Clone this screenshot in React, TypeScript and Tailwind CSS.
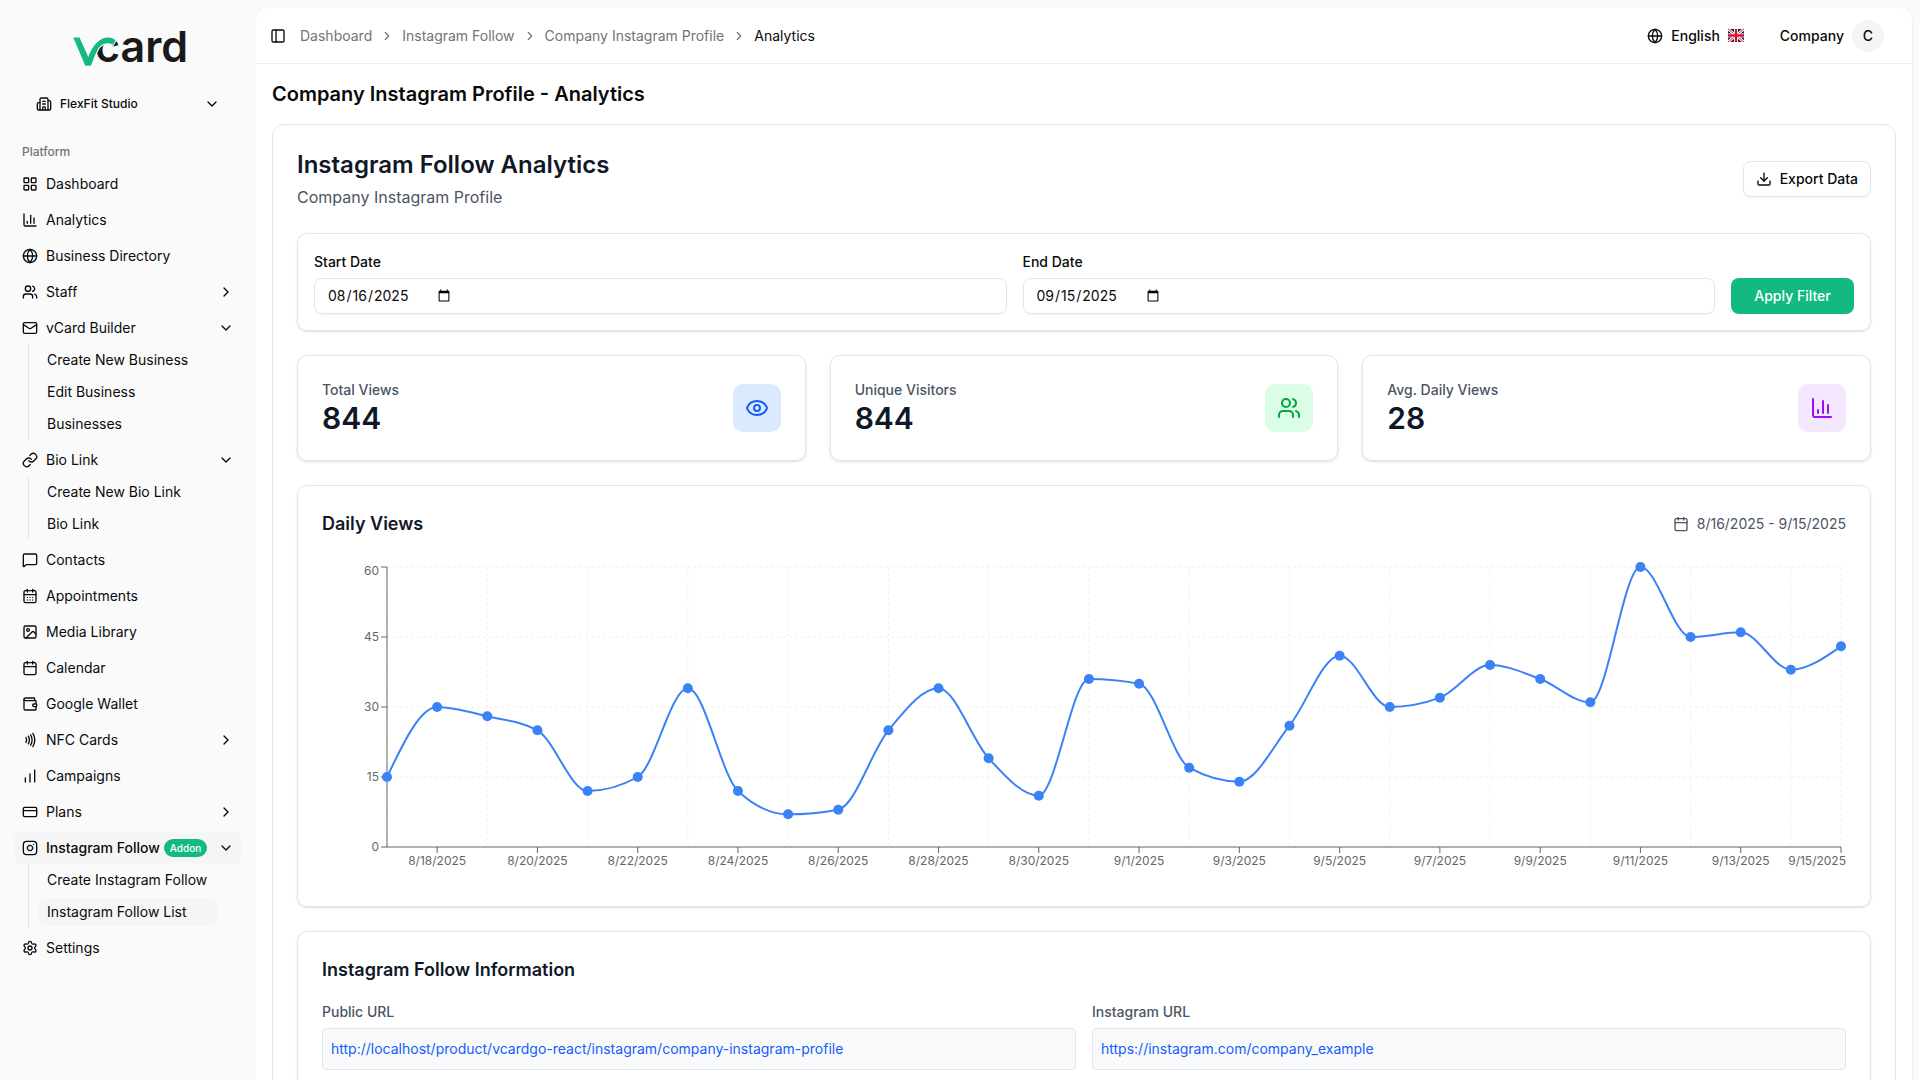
import React, { useLayoutEffect, useRef, useState } from 'react';
import {
    Calendar, CalendarDays, ChartColumn, ChevronDown, ChevronRight, CreditCard, Download, Eye, Globe, Image,
    Instagram, LayoutGrid, Link as LinkIcon, Mail, MessageSquare, Nfc, PanelLeft, Settings, Users, Wallet,
    Building2, ChartNoAxesColumnIncreasing,
} from 'lucide-react';

interface NavItem {
    label: string;
    icon: React.ElementType;
    collapsed?: boolean;
    active?: boolean;
    badge?: string;
    children?: { label: string; active?: boolean }[];
}

const NAV: NavItem[] = [
    { label: 'Dashboard', icon: LayoutGrid },
    { label: 'Analytics', icon: ChartColumn },
    { label: 'Business Directory', icon: Globe },
    { label: 'Staff', icon: Users, collapsed: true },
    {
        label: 'vCard Builder',
        icon: Mail,
        children: [{ label: 'Create New Business' }, { label: 'Edit Business' }, { label: 'Businesses' }],
    },
    { label: 'Bio Link', icon: LinkIcon, children: [{ label: 'Create New Bio Link' }, { label: 'Bio Link' }] },
    { label: 'Contacts', icon: MessageSquare },
    { label: 'Appointments', icon: CalendarDays },
    { label: 'Media Library', icon: Image },
    { label: 'Calendar', icon: Calendar },
    { label: 'Google Wallet', icon: Wallet },
    { label: 'NFC Cards', icon: Nfc, collapsed: true },
    { label: 'Campaigns', icon: ChartNoAxesColumnIncreasing },
    { label: 'Plans', icon: CreditCard, collapsed: true },
    {
        label: 'Instagram Follow',
        icon: Instagram,
        active: true,
        badge: 'Addon',
        children: [{ label: 'Create Instagram Follow' }, { label: 'Instagram Follow List', active: true }],
    },
    { label: 'Settings', icon: Settings },
];

const STATS = [
    { label: 'Total Views', value: '844', icon: Eye, tone: 'bg-blue-100 text-blue-600' },
    { label: 'Unique Visitors', value: '844', icon: Users, tone: 'bg-green-100 text-green-600' },
    { label: 'Avg. Daily Views', value: '28', icon: ChartColumn, tone: 'bg-purple-100 text-purple-600' },
];

// Views per day, starting 8/17/2025
const VIEWS = [
    15, 30, 28, 25, 12, 15, 34, 12, 7, 8, 25, 34, 19, 11, 36,
    35, 17, 14, 26, 41, 30, 32, 39, 36, 31, 60, 45, 46, 38, 43,
];

const dayLabel = (index: number) => {
    const d = new Date(2025, 7, 17 + index);
    return `${d.getMonth() + 1}/${d.getDate()}/${d.getFullYear()}`;
};

type Point = { x: number; y: number };

// Monotone cubic interpolation, so the curve never overshoots a point
function monotonePath(pts: Point[]) {
    const n = pts.length;
    const slope = (i: number) => (pts[i + 1].y - pts[i].y) / (pts[i + 1].x - pts[i].x);
    const m = pts.map((_, i) => {
        if (i === 0 || i === n - 1) return 0;
        const a = slope(i - 1);
        const b = slope(i);
        return (Math.sign(a) + Math.sign(b)) * Math.min(Math.abs(a), Math.abs(b), 0.5 * Math.abs((a + b) / 2)) || 0;
    });
    m[0] = (3 * slope(0) - m[1]) / 2;
    m[n - 1] = (3 * slope(n - 2) - m[n - 2]) / 2;

    let d = `M${pts[0].x},${pts[0].y}`;
    for (let i = 0; i < n - 1; i++) {
        const dx = (pts[i + 1].x - pts[i].x) / 3;
        d += `C${pts[i].x + dx},${pts[i].y + dx * m[i]},${pts[i + 1].x - dx},${pts[i + 1].y - dx * m[i + 1]},${pts[i + 1].x},${pts[i + 1].y}`;
    }
    return d;
}

const DailyViewsChart: React.FC = () => {
    const ref = useRef<HTMLDivElement>(null);
    const [width, setWidth] = useState(1200);

    useLayoutEffect(() => {
        const el = ref.current;
        if (!el) return;
        setWidth(el.clientWidth);
        const observer = new ResizeObserver(() => setWidth(el.clientWidth));
        observer.observe(el);
        return () => observer.disconnect();
    }, []);

    const left = 65;
    const right = width - 5;
    const top = 5;
    const bottom = 285;
    const last = VIEWS.length - 1;
    const xAt = (i: number) => left + ((right - left) * i) / last;
    const yAt = (v: number) => bottom - ((bottom - top) * v) / 60;
    const points = VIEWS.map((v, i) => ({ x: xAt(i), y: yAt(v) }));

    return (
        <div ref={ref} className="h-80 w-full">
            <svg width={width} height={320} role="img" aria-label="Daily views" className="block">
                <g stroke="#f0f0f0" strokeDasharray="3 3">
                    {[0, 15, 30, 45, 60].map(v => (
                        <line key={v} x1={left} x2={right} y1={yAt(v)} y2={yAt(v)} />
                    ))}
                    {VIEWS.map((_, i) => (i % 2 === 0 || i === last) && (
                        <line key={i} x1={xAt(i)} x2={xAt(i)} y1={top} y2={bottom} />
                    ))}
                </g>
                <g stroke="#666">
                    <line x1={left} x2={right} y1={bottom} y2={bottom} />
                    <line x1={left} x2={left} y1={top} y2={bottom} />
                    {[0, 15, 30, 45, 60].map(v => (
                        <line key={v} x1={left - 6} x2={left} y1={yAt(v)} y2={yAt(v)} />
                    ))}
                    {VIEWS.map((_, i) => i % 2 === 1 && (
                        <line key={i} x1={xAt(i)} x2={xAt(i)} y1={bottom} y2={bottom + 6} />
                    ))}
                </g>
                <g fill="#666" className="text-xs">
                    {[0, 15, 30, 45, 60].map(v => (
                        <text key={v} x={left - 8} y={Math.max(yAt(v), 9) + 4} textAnchor="end">{v}</text>
                    ))}
                    {VIEWS.map((_, i) => i % 2 === 1 && (
                        <text
                            key={i}
                            x={i === last ? width : xAt(i)}
                            y={bottom + 18}
                            textAnchor={i === last ? 'end' : 'middle'}
                        >
                            {dayLabel(i)}
                        </text>
                    ))}
                </g>
                <path d={monotonePath(points)} fill="none" stroke="#3b82f6" strokeWidth={2} />
                {points.map(p => (
                    <circle key={p.x} cx={p.x} cy={p.y} r={5} fill="#3b82f6" />
                ))}
            </svg>
        </div>
    );
};

const Logo: React.FC = () => (
    <svg width={132} height={56} viewBox="-8 -8 132 56" role="img" aria-label="vcard">
        <text x={25} y={36} fontSize={43} fontWeight={600} fill="#1a1a1a">card</text>
        <path
            d="M3.3 11.5h6.2L18.3 31C21.500 23 24.500 18.500 28.500 15.300C33 11.300 40 10 45.600 14.200L43 18.700C38 16.300 33.500 17 30 20.500C26.500 24 24.500 31.500 20.800 39.700H15.300Z"
            fill="#12b981"
            stroke="#fafafa"
            strokeWidth={2}
            paintOrder="stroke"
        />
    </svg>
);

const UkFlag: React.FC = () => (
    <svg width={16} height={13} viewBox="0 0 16 13" aria-hidden="true">
        <rect width={16} height={13} fill="#23215f" />
        <path d="M0 0l16 13M16 0L0 13" stroke="#fff" strokeWidth={2.6} />
        <path d="M0 0l16 13M16 0L0 13" stroke="#d0142c" strokeWidth={0.9} />
        <path d="M8 0v13M0 6.5h16" stroke="#fff" strokeWidth={4} />
        <path d="M8 0v13M0 6.5h16" stroke="#d0142c" strokeWidth={2.4} />
    </svg>
);

const Sidebar: React.FC = () => (
    <aside className="w-64 shrink-0 overflow-y-auto px-3.5 [scrollbar-width:none]">
        <a href="#" className="flex h-20 items-center justify-center pt-3">
            <Logo />
        </a>
        <div className="px-2.5 pt-2">
            <button className="flex h-8 w-full items-center gap-2 px-3 text-xs font-medium">
                <Building2 size={16} />
                FlexFit Studio
                <ChevronDown size={16} className="ml-auto" />
            </button>
        </div>
        <div className="mt-4 flex h-8 items-center px-2 text-xs font-medium text-neutral-500">Platform</div>
        <nav>
            <ul className="flex flex-col gap-1">
                {NAV.map(item => (
                    <li key={item.label}>
                        <a
                            href="#"
                            className={`flex h-8 items-center gap-2 rounded-lg px-2 text-sm ${item.active ? 'bg-neutral-100 font-medium' : ''}`}
                        >
                            <item.icon size={16} className="shrink-0" />
                            <span className="whitespace-nowrap">{item.label}</span>
                            {item.badge && (
                                <span className="-ml-1 rounded-full bg-[#12b981] px-1.5 text-[10px] leading-[18px] font-medium text-white">
                                    {item.badge}
                                </span>
                            )}
                            {item.collapsed && <ChevronRight size={16} className="ml-auto shrink-0" />}
                            {item.children && <ChevronDown size={16} className="ml-auto shrink-0" />}
                        </a>
                        {item.children && (
                            <ul className="mx-3.5 flex flex-col gap-1 border-l border-neutral-200 px-2.5 py-0.5">
                                {item.children.map(child => (
                                    <li key={child.label}>
                                        <a
                                            href="#"
                                            className={`flex h-7 items-center rounded-lg px-2 text-sm whitespace-nowrap ${child.active ? 'bg-neutral-100' : ''}`}
                                        >
                                            {child.label}
                                        </a>
                                    </li>
                                ))}
                            </ul>
                        )}
                    </li>
                ))}
            </ul>
        </nav>
    </aside>
);

const Header: React.FC = () => (
    <header className="flex h-14 items-center justify-between border-b border-neutral-200/70 pr-7 pl-2">
        <div className="flex items-center gap-2">
            <button aria-label="Toggle sidebar" className="flex size-7 items-center justify-center">
                <PanelLeft size={16} />
            </button>
            <nav aria-label="Breadcrumb">
                <ol className="flex items-center gap-2 text-sm text-neutral-500">
                    {['Dashboard', 'Instagram Follow', 'Company Instagram Profile'].map(crumb => (
                        <li key={crumb} className="flex items-center gap-2">
                            <a href="#">{crumb}</a>
                            <ChevronRight size={14} />
                        </li>
                    ))}
                    <li className="text-neutral-950">Analytics</li>
                </ol>
            </nav>
        </div>
        <div className="flex items-center gap-9 text-sm font-medium">
            <button className="flex items-center gap-2">
                <Globe size={16} />
                English
                <UkFlag />
            </button>
            <button className="flex items-center gap-2">
                Company
                <span className="flex size-8 items-center justify-center rounded-full bg-neutral-100">C</span>
            </button>
        </div>
    </header>
);

const DateField: React.FC<{ id: string; label: string; value: string }> = ({ id, label, value }) => (
    <div className="flex-1">
        <label htmlFor={id} className="block text-sm leading-6 font-medium">{label}</label>
        <input
            id={id}
            type="date"
            defaultValue={value}
            className="mt-1 flex h-9 w-full rounded-lg border border-neutral-200 px-3 py-1 text-sm shadow-xs outline-none"
        />
    </div>
);

const UrlField: React.FC<{ label: string; url: string }> = ({ label, url }) => (
    <div>
        <div className="text-sm leading-6 font-medium text-gray-600">{label}</div>
        <div className="mt-1 rounded border border-gray-200 bg-gray-50 p-2 text-sm leading-6">
            <a href={url} className="text-blue-600">{url}</a>
        </div>
    </div>
);

export default function App() {
    return (
        <div className="flex h-screen bg-neutral-50 font-['Inter',sans-serif] text-neutral-950">
            <Sidebar />
            <div className="min-w-0 flex-1 overflow-y-auto py-2 pr-2 [scrollbar-width:none]">
                <main className="rounded-xl bg-white shadow-sm">
                    <Header />
                    <div className="p-4">
                        <h1 className="text-xl font-semibold">Company Instagram Profile - Analytics</h1>

                        <div className="mt-4 space-y-6 rounded-xl border border-neutral-200 p-6">
                            <div className="flex items-center justify-between">
                                <div>
                                    <h2 className="text-2xl font-semibold text-gray-900">Instagram Follow Analytics</h2>
                                    <p className="mt-1 text-gray-600">Company Instagram Profile</p>
                                </div>
                                <button className="flex h-9 items-center gap-2 rounded-lg border border-neutral-200 px-3 text-sm font-medium shadow-xs">
                                    <Download size={16} />
                                    Export Data
                                </button>
                            </div>

                            <form className="flex items-end gap-4 rounded-[10px] border border-neutral-200 p-4 shadow-sm">
                                <DateField id="start-date" label="Start Date" value="2025-08-16" />
                                <DateField id="end-date" label="End Date" value="2025-09-15" />
                                <button type="button" className="h-9 w-[123px] rounded-lg bg-[#12b981] text-sm font-medium text-white">
                                    Apply Filter
                                </button>
                            </form>

                            <div className="grid grid-cols-3 gap-6">
                                {STATS.map(stat => (
                                    <div key={stat.label} className="flex items-center justify-between rounded-[10px] border border-neutral-200 p-6 shadow-sm">
                                        <div>
                                            <p className="text-sm font-medium text-gray-600">{stat.label}</p>
                                            <p className="text-3xl font-semibold text-gray-900">{stat.value}</p>
                                        </div>
                                        <div className={`rounded-[10px] p-3 ${stat.tone}`}>
                                            <stat.icon size={24} />
                                        </div>
                                    </div>
                                ))}
                            </div>

                            <section className="rounded-[10px] border border-neutral-200 p-6 shadow-sm">
                                <div className="mb-6 flex items-center justify-between">
                                    <h3 className="text-lg font-semibold text-gray-900">Daily Views</h3>
                                    <div className="flex items-center gap-2 text-sm text-gray-600">
                                        <Calendar size={16} />
                                        8/16/2025 - 9/15/2025
                                    </div>
                                </div>
                                <DailyViewsChart />
                            </section>

                            <section className="rounded-[10px] border border-neutral-200 p-6 shadow-sm">
                                <h3 className="mb-4 text-lg font-semibold text-gray-900">Instagram Follow Information</h3>
                                <div className="grid grid-cols-2 gap-4">
                                    <UrlField label="Public URL" url="http://localhost/product/vcardgo-react/instagram/company-instagram-profile" />
                                    <UrlField label="Instagram URL" url="https://instagram.com/company_example" />
                                </div>
                            </section>
                        </div>
                    </div>
                </main>
            </div>
        </div>
    );
}
